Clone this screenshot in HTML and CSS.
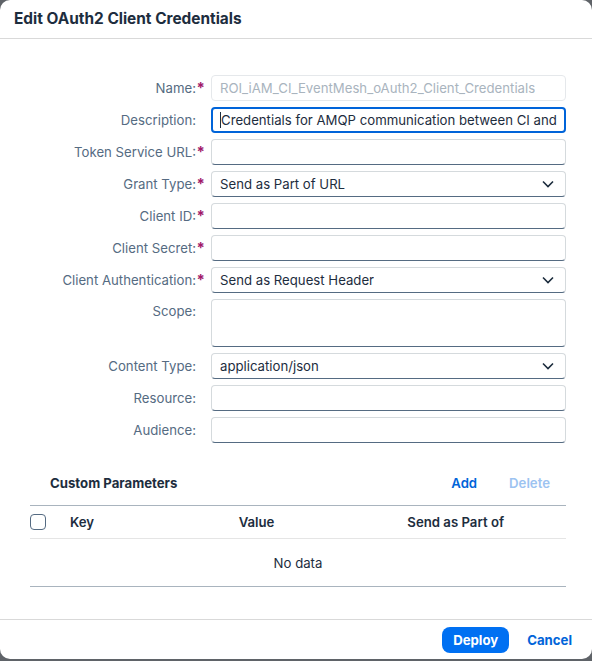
FILE: index.html
```html
<!DOCTYPE html>
<html>
<head>
<meta charset="utf-8">
<link rel="stylesheet" href="styles.css">
</head>
<body>
<div class="dialog">
  <header class="dlg-header"><h1>Edit OAuth2 Client Credentials</h1></header>
  <main class="dlg-content">
    <form class="form">
      <div class="row"><label class="lbl req">Name:</label><div class="field input disabled"><span class="val">ROI_iAM_CI_EventMesh_oAuth2_Client_Credentials</span></div></div>
      <div class="row"><label class="lbl">Description:</label><div class="field input focused"><span class="caret"></span><span class="val">Credentials for AMQP communication between CI and I</span></div></div>
      <div class="row"><label class="lbl req">Token Service URL:</label><div class="field input"></div></div>
      <div class="row"><label class="lbl req">Grant Type:</label><div class="field input select"><span class="val">Send as Part of URL</span><svg class="chev" viewBox="0 0 12 8" width="12" height="8"><path d="M1 1.5 L6 6.5 L11 1.5" fill="none" stroke="#1d2d3e" stroke-width="1.6"/></svg></div></div>
      <div class="row"><label class="lbl req">Client ID:</label><div class="field input"></div></div>
      <div class="row"><label class="lbl req">Client Secret:</label><div class="field input"></div></div>
      <div class="row"><label class="lbl req">Client Authentication:</label><div class="field input select"><span class="val">Send as Request Header</span><svg class="chev" viewBox="0 0 12 8" width="12" height="8"><path d="M1 1.5 L6 6.5 L11 1.5" fill="none" stroke="#1d2d3e" stroke-width="1.6"/></svg></div></div>
      <div class="row row-tall"><label class="lbl">Scope:</label><div class="field input textarea"></div></div>
      <div class="row"><label class="lbl">Content Type:</label><div class="field input select"><span class="val">application/json</span><svg class="chev" viewBox="0 0 12 8" width="12" height="8"><path d="M1 1.5 L6 6.5 L11 1.5" fill="none" stroke="#1d2d3e" stroke-width="1.6"/></svg></div></div>
      <div class="row"><label class="lbl">Resource:</label><div class="field input"></div></div>
      <div class="row"><label class="lbl">Audience:</label><div class="field input"></div></div>
    </form>

    <section class="params">
      <div class="params-bar">
        <h2>Custom Parameters</h2>
        <div class="params-actions">
          <span class="link">Add</span>
          <span class="link disabled">Delete</span>
        </div>
      </div>
      <div class="table">
        <div class="thead">
          <div class="cell cb"><span class="checkbox"></span></div>
          <div class="cell">Key</div>
          <div class="cell">Value</div>
          <div class="cell">Send as Part of</div>
        </div>
        <div class="nodata">No data</div>
      </div>
    </section>
  </main>
  <footer class="dlg-footer">
    <button class="btn primary" type="button">Deploy</button>
    <button class="btn ghost" type="button">Cancel</button>
  </footer>
</div>
</body>
</html>
```

FILE: styles.css
```css
* { box-sizing: border-box; }
html, body { margin: 0; padding: 0; }
body {
  width: 592px;
  height: 661px;
  background: #5f6368;
  font-family: "Inter", "Liberation Sans", Arial, sans-serif;
  color: #1d2d3e;
  overflow: hidden;
}
.dialog {
  width: 592px;
  height: 659px;
  background: #fff;
  border-radius: 10px;
  display: flex;
  flex-direction: column;
  overflow: hidden;
}
.dlg-header {
  height: 39px;
  border-bottom: 1px solid #d9d9d9;
  display: flex;
  align-items: center;
  padding: 0 14px 2px;
  flex: none;
}
.dlg-header h1 {
  margin: 0;
  font-size: 15.4px;
  font-weight: 700;
  color: #1d2d3e;
}
.dlg-content {
  flex: 1;
  padding-top: 36px;
}
.form {
  display: flex;
  flex-direction: column;
  gap: 6px;
}
.row {
  display: flex;
  align-items: center;
  height: 26px;
}
.row-tall { height: 48px; align-items: flex-start; }
.row-tall .lbl { padding-top: 4px; }
.lbl {
  width: 196px;
  flex: none;
  text-align: right;
  font-size: 13.2px;
  color: #556b82;
  position: relative;
  white-space: nowrap;
}
.lbl.req::after {
  content: "*";
  position: absolute;
  right: -9px;
  top: -2px;
  color: #a1196b;
  font-size: 15px;
  font-weight: 700;
}
.field {
  margin-left: 15px;
  width: 355px;
  height: 26px;
  flex: none;
}
.input {
  border: 1px solid #d5dadd;
  border-bottom-color: #556b82;
  border-radius: 4px;
  background: #fff;
  display: flex;
  align-items: center;
  padding: 0 8px;
  font-size: 13.2px;
  color: #1d2d3e;
  white-space: nowrap;
  overflow: hidden;
  position: relative;
}
.input.textarea { height: 48px; }
.input.disabled {
  border-color: #e5e8eb;
  border-bottom-color: #e5e8eb;
  color: #a9b4be;
}
.input.focused {
  border: 2px solid #0064d9;
  padding: 0 7px;
}
.caret {
  display: inline-block;
  width: 1px;
  height: 16px;
  background: #1d2d3e;
  flex: none;
}
.val { overflow: hidden; }
.select { justify-content: space-between; padding-right: 11px; }
.chev { flex: none; }

.params { margin-top: 25px; padding: 0 26px 0 30px; }
.params-bar {
  display: flex;
  align-items: center;
  justify-content: space-between;
  height: 30px;
  padding-left: 20px;
  padding-right: 16px;
}
.params-bar h2 {
  margin: 0;
  font-size: 13.2px;
  font-weight: 700;
  color: #1d2d3e;
}
.params-actions { display: flex; gap: 32px; }
.link {
  font-size: 13.2px;
  font-weight: 600;
  color: #0064d9;
}
.link.disabled { color: #9cc3f1; }

.table { margin-top: 7px; }
.thead {
  display: grid;
  grid-template-columns: 30px 1fr 1fr 1fr;
  height: 34px;
  align-items: center;
  border-top: 1px solid #a9b4be;
  border-bottom: 1px solid #e5e5e5;
}
.cell {
  padding-left: 10px;
  font-size: 13.2px;
  font-weight: 600;
  color: #1d2d3e;
}
.cell.cb { padding-left: 0; display: flex; align-items: center; }
.checkbox {
  width: 16px;
  height: 16px;
  border: 1px solid #556b82;
  border-radius: 4px;
  background: #fff;
}
.nodata {
  height: 48px;
  display: flex;
  align-items: center;
  justify-content: center;
  font-size: 13.2px;
  color: #1d2d3e;
  border-bottom: 1px solid #a9b4be;
}

.dlg-footer {
  height: 40px;
  border-top: 1px solid #d9d9d9;
  display: flex;
  align-items: center;
  justify-content: flex-end;
  gap: 10px;
  padding: 0 12px 0 0;
  flex: none;
}
.btn {
  font-family: inherit;
  font-size: 13.2px;
  font-weight: 700;
  border: none;
  height: 26px;
  border-radius: 8px;
  padding: 0 11px;
  cursor: pointer;
}
.btn.primary { background: #0070f2; color: #fff; }
.btn.ghost { background: transparent; color: #0064d9; padding: 0 8px; }
```
